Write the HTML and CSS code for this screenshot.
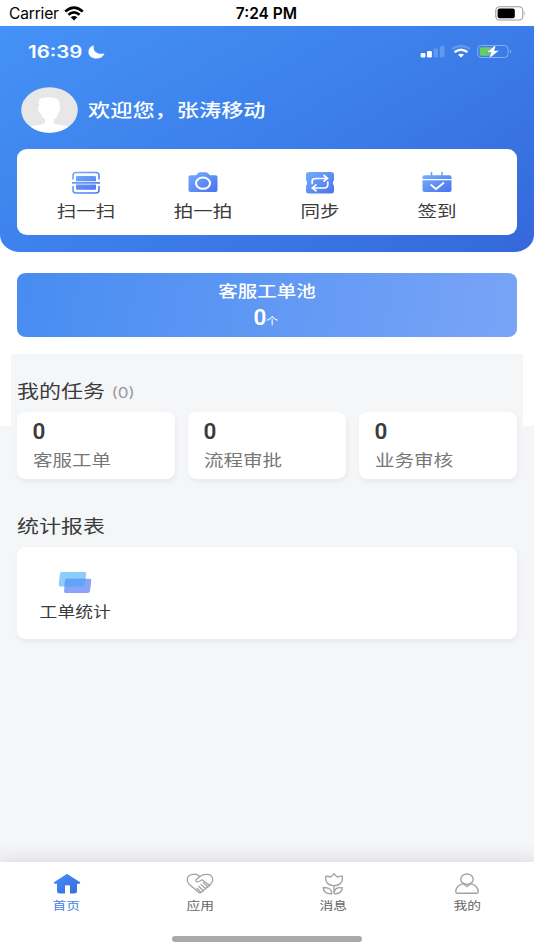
FILE: index.html
```html
<!DOCTYPE html>
<html lang="zh-CN">
<head>
<meta charset="utf-8">
<title>首页</title>
<link rel="stylesheet" href="styles.css">
</head>
<body>
<svg class="defs" width="0" height="0"><defs>
<linearGradient id="g" x1="0" y1="0" x2="1" y2="1"><stop offset="0" stop-color="#73aefb"/><stop offset="1" stop-color="#4b72ef"/></linearGradient>
<linearGradient id="h" x1="0" y1="0" x2="1" y2="1"><stop offset="0" stop-color="#4290f4"/><stop offset="1" stop-color="#386be0"/></linearGradient>
</defs></svg>
<div class="device-bar">
  <div class="carrier"><span>Carrier</span>
    <svg width="20" height="15" viewBox="0 0 20 15"><g fill="none" stroke="#000" stroke-width="2.6"><path d="M1.2 5.5Q10-2.4 18.8 5.5M4.4 8.8Q10 4 15.6 8.8"/></g><path d="M6.7 11.3Q10 8.6 13.3 11.3L10 14.6Z"/></svg>
  </div>
  <span class="clock">7:24 PM</span>
  <svg class="battery" width="32" height="15" viewBox="0 0 32 15"><rect x=".8" y=".8" width="27" height="13.2" rx="3.8" fill="none" stroke="#999" stroke-width="1.1"/><rect x="2.6" y="2.6" width="17.2" height="9.6" rx="2"/><path d="M29.6 5.2Q31.4 7.4 29.6 9.8Z" fill="#888"/></svg>
</div>
<header class="hero">
  <div class="hero-status">
    <span class="wide-left hero-time">16:39</span>
    <svg class="moon" width="17" height="14" viewBox="0 0 17 14"><path d="M5.7.2C4.8 7 9.5 9.8 16.6 8.4C15 12 12 13.5 8.5 13.5C4 13.5.4 10.7.4 6.9C.4 3.7 2.5 1.2 5.7.2Z" fill="#fff"/></svg>
    <svg class="signals" width="93" height="16" viewBox="0 0 93 16">
      <g fill="#fff"><rect x=".7" y="9" width="4.7" height="4.5" rx="1.3"/><rect x="7" y="7" width="4.9" height="6.5" rx="1.3"/><rect x="13.5" y="4.5" width="4.5" height="9" rx="1.3" opacity=".2"/><rect x="19.8" y="2" width="4.7" height="11.5" rx="1.3" opacity=".2"/></g>
      <path d="M32 5Q41-1 50 5" fill="none" stroke="#fff" stroke-width="2.3" opacity=".2"/>
      <path d="M34.6 8.1Q41 3.3 47.4 8.1" fill="none" stroke="#fff" stroke-width="2.3"/><path d="M38 10.7Q41 8.7 44 10.7L41 13.4Z" fill="#fff"/>
      <rect x="57.7" y="1.5" width="30.4" height="12" rx="3.6" fill="none" stroke="#fff" stroke-opacity=".38"/><rect x="59.7" y="3.3" width="12.5" height="8.4" rx="2" fill="#65cf63"/><path d="M90 5.4Q92.4 7.5 90 9.6Z" fill="#fff" opacity=".4"/>
      <path d="M76 .4L66.2 8.6H70.8L69 14.8L79.4 6.4H74.6Z" fill="#fff" stroke="#3d80eb" stroke-width=".6"/>
    </svg>
  </div>
  <div class="welcome">
    <svg width="57" height="46" viewBox="0 0 57 46"><clipPath id="c"><ellipse cx="28.5" cy="23" rx="28.3" ry="22.8"/></clipPath><ellipse cx="28.5" cy="23" rx="28.3" ry="22.8" fill="#e7e7e8"/><path clip-path="url(#c)" fill="#fff" d="M18 17Q16.5 12 21 11Q29 9.3 35.5 11.7Q39.5 13 38.4 20Q40 20.5 38.8 24Q37.8 25.4 37.2 26Q36 31 32.8 32.5V36Q36 38 47 39V46H10V39Q21 38 24 36V32.5Q20.5 30 19.4 26Q16.5 24 17.2 20.5L18 20Z"/></svg>
    <span class="wide name">欢迎您，张涛移动</span>
  </div>
  <nav class="quick">
    <div class="quick-item"><svg width="30" height="24" viewBox="0 0 30 24"><path d="M2 8.5V4.2Q2 1.5 5 1.5H25Q28 1.5 28 4.2V8.5M28 15V19Q28 22 25 22H5Q2 22 2 19V15" fill="none" stroke="url(#g)" stroke-width="1.6"/><path d="M5 6Q5 5 6.2 5H23.8Q25 5 25 6V10.2H5ZM5 13.5H25V18Q25 18.8 23.8 18.8H6.2Q5 18.8 5 18ZM1 11H29V12.7H1Z" fill="url(#g)"/></svg><span class="wide">扫一扫</span></div>
    <div class="quick-item"><svg width="30" height="24" viewBox="0 0 30 24"><path d="M2.5 4.2H8L10.3 2Q11 1.2 12 1.2H18Q19 1.2 19.7 2L22 4.2H27.5Q29.5 4.2 29.5 6V19Q29.5 21 27.5 21H2.5Q.5 21 .5 19V6Q.5 4.2 2.5 4.2Z" fill="url(#g)"/><ellipse cx="15" cy="12.2" rx="7" ry="5.6" fill="none" stroke="#fff" stroke-width="2"/></svg><span class="wide">拍一拍</span></div>
    <div class="quick-item"><svg width="30" height="24" viewBox="0 0 30 24"><path d="M4 1H26Q29 1 29 3.5V9Q26.8 12 29 15V20Q29 22.5 26 22.5H4Q1 22.5 1 20V15Q3.2 12 1 9V3.5Q1 1 4 1Z" fill="url(#g)"/><path d="M7.2 12.5V10Q7.2 7.5 10.5 7.5H21.5M19 4.5L22.5 7.5L19 10.2M22.8 11V13.5Q22.8 17 19 17H8M11 13.8L7.3 17L11 19.8" fill="none" stroke="#fff" stroke-width="1.7" stroke-linecap="round"/></svg><span class="wide">同步</span></div>
    <div class="quick-item"><svg width="30" height="24" viewBox="0 0 30 24"><path d="M.5 8V6Q.5 4.2 2.5 4.2H27.5Q29.5 4.2 29.5 6V8ZM.5 9.3H29.5V19Q29.5 21 27.5 21H2.5Q.5 21 .5 19Z" fill="url(#g)"/><path d="M9.5 1V5M20 1V5" stroke="#6ba3fa" stroke-width="1.6"/><path d="M9.2 14L14 18L21.5 12" fill="none" stroke="#fff" stroke-width="1.8" stroke-linecap="round"/></svg><span class="wide">签到</span></div>
  </nav>
</header>
<section class="pool"><span class="wide pool-title">客服工单池</span><div class="pool-value"><b>0</b><small class="wide-left">个</small></div></section>
<main class="content">
  <h2 class="wide-left heading">我的任务<span class="total">(0)</span></h2>
  <div class="tasks">
    <div class="task"><b>0</b><span class="wide-left">客服工单</span></div>
    <div class="task"><b>0</b><span class="wide-left">流程审批</span></div>
    <div class="task"><b>0</b><span class="wide-left">业务审核</span></div>
  </div>
  <h2 class="wide-left heading reports-heading">统计报表</h2>
  <div class="reports"><div class="report"><svg width="34" height="23" viewBox="0 0 34 23"><path d="M4 1H26.5Q28.5 1 28.3 2.8L26.8 14Q26.6 15.5 24.7 15.5H2.3Q.5 15.5.7 13.8L1.9 2.7Q2.1 1 4 1Z" fill="#8ccdfb"/><path d="M9 7.8H31.7Q33.6 7.8 33.3 9.7L32 20Q31.7 22 29.7 22H7.8Q5.7 22 6 20L7 9.7Q7.2 7.8 9 7.8Z" fill="#88a5f8"/><path d="M9 7.8H27.6L26.8 14Q26.6 15.5 24.7 15.5H6.4L7 9.7Q7.2 7.8 9 7.8Z" fill="#60a6f7"/></svg><span class="wide">工单统计</span></div></div>
</main>
<footer class="footer">
  <nav class="tabs">
    <div class="tab active"><svg width="28" height="22" viewBox="0 0 28 22"><path d="M13 1.5Q14 .6 15 1.5L26.7 9Q28 10.5 26 10.8H24V18Q24 20.5 21 20.5H17V13.5Q17 12.3 16 12.3H13Q12 12.3 12 13.5V20.5H7Q4 20.5 4 18V10.8H2Q0 10.5 1.3 9Z" fill="url(#h)"/></svg><span class="wide">首页</span></div>
    <div class="tab"><svg width="28" height="22" viewBox="0 0 28 22"><path d="M14 3.5Q10.5.8 6.8 1.3Q1.2 2 1.2 7Q1.2 9.3 3.2 11.3L12.5 19.3Q14 20.6 15.5 19.3L24.5 11.3Q26.8 9 26.8 6.5Q26.2 1 20.5 1.3Q17 1.3 14 3.5L10.2 6.5Q9 8.2 11 8.8Q13 9 16 6.8L24.3 13M17 9.5L22.5 14.2M14.7 11.3L20.3 16M12.5 13L17.5 18M10.5 15L15 19.3" fill="none" stroke="#a2a2a2" stroke-width="1.25"/></svg><span class="wide">应用</span></div>
    <div class="tab"><svg width="28" height="22" viewBox="0 0 28 22"><path d="M5.8 3.5Q9 2.7 10.2 4.2Q12.3 3.2 14 .7Q15.7 3.2 17.8 4.2Q19 2.7 22.3 3.3Q23.2 12.6 14 12.6Q4.8 12.6 5.8 3.5ZM14 12.6V20.5M14 20.5Q14.3 13.5 22.4 14.8Q21.5 21 14 20.8M11.7 20.8Q12 14.3 3.3 14.5Q3.2 21 11.7 20.8Z" fill="none" stroke="#a2a2a2" stroke-width="1.35"/></svg><span class="wide">消息</span></div>
    <div class="tab"><svg width="28" height="22" viewBox="0 0 28 22"><ellipse cx="14" cy="6.2" rx="6.2" ry="5.2" fill="none" stroke="#a2a2a2" stroke-width="1.35"/><path d="M10.3 10.7Q3.2 12.5 2.7 18.6Q2.7 20.2 4.2 20.2H23.8Q25.3 20.2 25.3 18.6Q24.8 12.5 17.7 10.7L14 13.7Z" fill="none" stroke="#a2a2a2" stroke-width="1.35"/></svg><span class="wide">我的</span></div>
  </nav>
  <div class="home-indicator"></div>
</footer>
</body>
</html>
```
FILE: styles.css
```css
* { box-sizing: border-box; }
body { margin: 0; height: 950px; display: flex; flex-direction: column; overflow: hidden; color: #3b3b3b; font-family: "Liberation Sans", "Noto Sans CJK SC", sans-serif; background: linear-gradient(#fff 426px, #f5f6f8 426px); }
svg { display: block; flex: none; }
.defs { position: absolute; }
.wide { display: inline-block; white-space: nowrap; transform: scaleX(1.22); }
.wide-left { display: block; width: fit-content; white-space: nowrap; transform: scaleX(1.22); transform-origin: left; }
.device-bar { height: 26px; flex: none; display: grid; grid-template-columns: 1fr auto 1fr; align-items: center; padding: 1px 7px 0 9px; color: #000; font: 15.6px/26px Inter, sans-serif; }
.carrier { display: flex; align-items: center; gap: 5px; letter-spacing: -.2px; }
.carrier svg { margin-top: -2px; }
.clock { font-weight: 600; font-size: 15.5px; margin-left: -3px; }
.battery { justify-self: end; margin-top: -2px; }
.hero { height: 226px; flex: none; padding: 17px 17px 0; border-radius: 0 0 20px 20px / 0 0 17px 17px; background: linear-gradient(150deg, #4492f7 0%, #3d80eb 48%, #3568da 100%); }
.hero-status { display: flex; align-items: center; height: 18px; color: #fff; }
.hero-time { margin-left: 10.5px; width: 45px; font: 600 16.8px/18px Inter, sans-serif; }
.moon { margin-left: 15px; }
.signals { margin-left: auto; margin-right: 4px; }
.welcome { display: flex; align-items: center; height: 46px; margin: 26px 0 0 4px; color: #fff; }
.name { margin: 2px 0 0 9.5px; font-size: 18.2px; font-weight: 500; line-height: 28px; transform-origin: left; }
.quick { margin-top: 16px; height: 86px; border-radius: 10px / 9px; background: #fff; display: grid; grid-template-columns: repeat(4, 117.1px); padding-left: 10.2px; }
.quick-item { display: flex; flex-direction: column; align-items: center; padding-top: 22px; font-size: 16px; line-height: 24px; }
.quick-item span { margin-top: 5px; }
.pool { height: 64px; flex: none; margin: 21px 17px 0; border-radius: 9px / 8px; display: flex; flex-direction: column; align-items: center; color: #fff; background: linear-gradient(100deg, #478cf1, #79a4f7); }
.pool-title { font-size: 16px; line-height: 24px; margin: 7px 0 0 0; font-weight: 500; }
.pool-value { display: flex; align-items: baseline; line-height: 26px; margin-right: 4px; }
.pool-value b { font: 600 22.5px/26px Roboto, sans-serif; }
.pool-value small { font-size: 10px; font-weight: 400; }
.content { margin: 17px 11px 0; padding: 24px 6px 0; flex: 1; background: #f5f6f8; }
.heading { margin: 0; font-size: 18px; font-weight: 400; line-height: 28px; }
.total { font: 14px Inter, sans-serif; color: #999; margin-left: 5.5px; }
.tasks { display: grid; grid-template-columns: repeat(3, 158px); justify-content: space-between; margin-top: 6px; }
.task { height: 67px; padding: 5px 15.5px; border-radius: 9px / 8px; background: #fff; box-shadow: 1px 3px 5px #e7e9ec; }
.task b { display: block; font: 600 22.5px/28px Roboto, sans-serif; }
.task span { font-size: 16px; line-height: 24px; margin-top: 4px; color: #777; }
.reports-heading { margin-top: 34px; }
.reports { margin-top: 6px; height: 92px; border-radius: 9px / 8px; background: #fff; box-shadow: 1px 3px 5px #e7e9ec; }
.report { width: 115.5px; padding-top: 23.5px; display: flex; flex-direction: column; align-items: center; font-size: 14.6px; line-height: 22px; }
.report span { margin-top: 7px; }
.footer { height: 88px; flex: none; background: #fff; box-shadow: 0 -2px 16px 2px #dcdddf; }
.tabs { display: grid; grid-template-columns: repeat(4, 1fr); }
.tab { display: flex; flex-direction: column; align-items: center; padding-top: 11px; font-size: 11.3px; line-height: 18px; color: #666; }
.tab span { margin-top: 2px; }
.active { color: #4683e8; }
.home-indicator { width: 190px; height: 6px; margin: 21px auto 0; border-radius: 3px; background: #a9a9a9; }
```
